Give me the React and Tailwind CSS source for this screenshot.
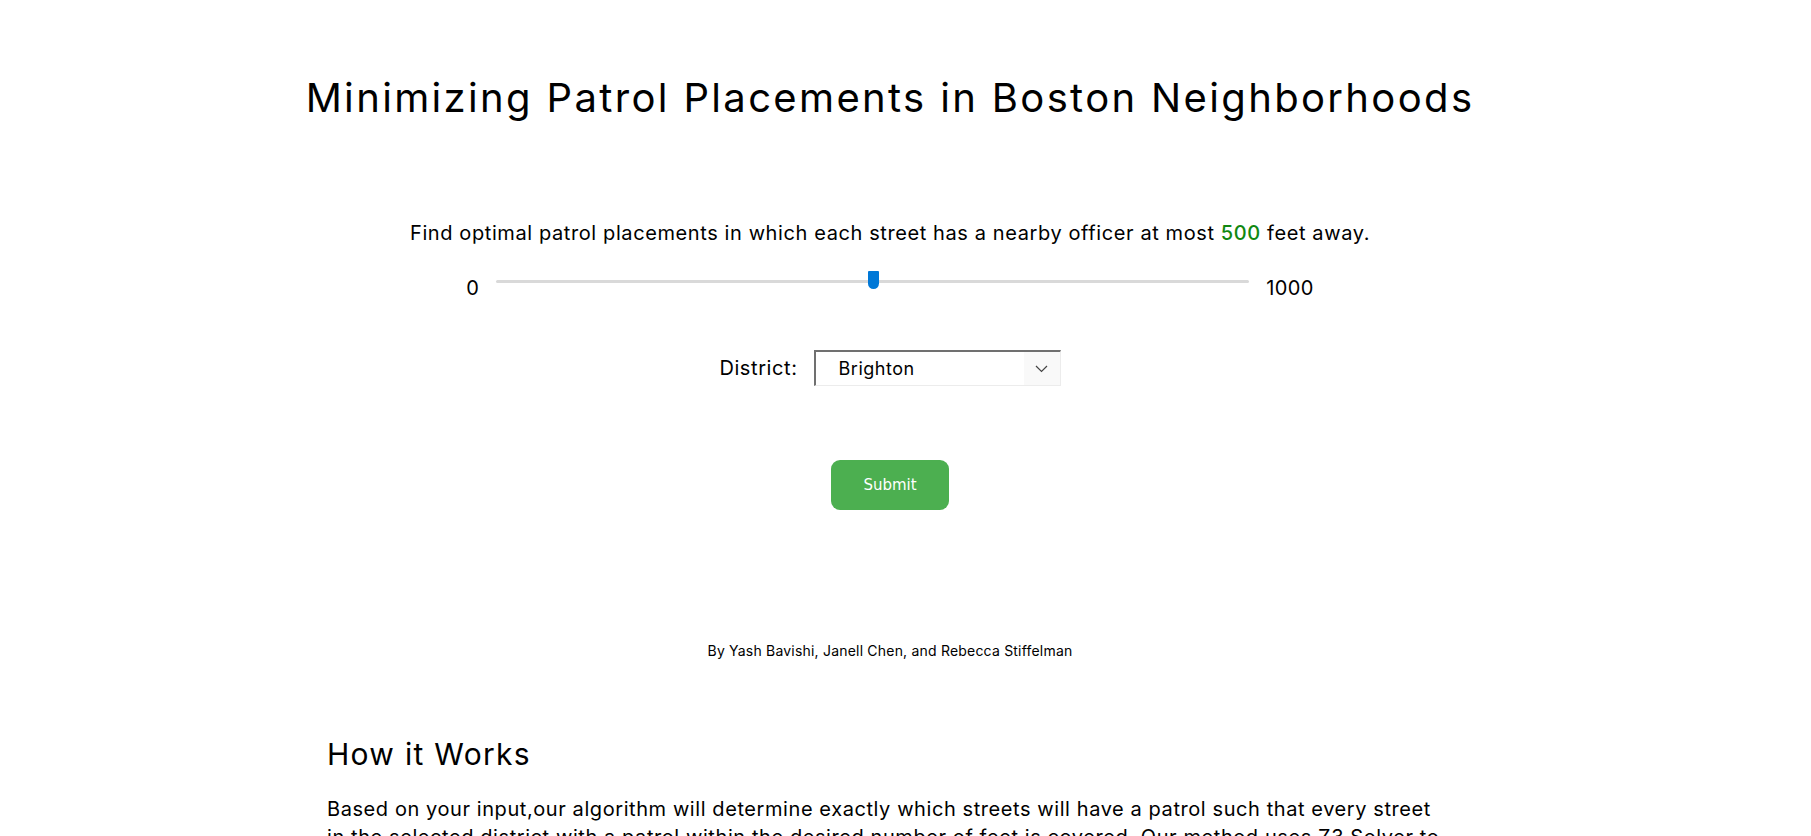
import { useState } from 'react';

const DISTRICTS = ['Brighton', 'Allston', 'Back Bay', 'Dorchester', 'Roxbury'];

function Slider({ value, min, max }) {
  const pct = ((value - min) / (max - min)) * 100;
  return (
    <div className="flex items-center gap-[17px]">
      <span className="text-[20px] leading-none mt-[14px] tracking-[0.4px]">{min}</span>
      <div className="relative w-[753px] h-[3px] bg-[#d9d9d9] rounded-full">
        <div
          className="absolute top-[-9px] w-[11px] h-[18px] bg-[#0078d7] rounded-b-[6px] rounded-t-[1px]"
          style={{ left: `calc(${pct}% - 5px)` }}
        />
      </div>
      <span className="text-[20px] leading-none mt-[14px] tracking-[0.4px]">{max}</span>
    </div>
  );
}

export default function App() {
  const [feet] = useState(500);
  const [district] = useState(DISTRICTS[0]);

  return (
    <div className="min-h-screen bg-white text-black font-['Inter',sans-serif] pr-[31px] overflow-hidden h-[836px]">
      <div className="flex flex-col items-center">
        <h1 className="mt-[74px] text-[40px] leading-[48px] font-normal tracking-[2.35px]">
          Minimizing Patrol Placements in Boston Neighborhoods
        </h1>

        <p className="mt-[99px] text-[20px] leading-[24px] tracking-[0.6px]">
          Find optimal patrol placements in which each street has a nearby officer at most{' '}
          <span className="text-[#118811] font-medium">{feet}</span> feet away.
        </p>

        <div className="mt-[19px]">
          <Slider value={feet} min={0} max={1000} />
        </div>

        <div className="mt-[52px] flex items-center gap-[16px]">
          <span className="text-[20px] tracking-[0.6px]">District:</span>
          <div className="w-[247px] h-[36px] flex items-center border-t-2 border-l-2 border-t-[#707070] border-l-[#707070] border-r border-b border-r-[#ececec] border-b-[#ececec]">
            <span className="flex-1 pl-[23px] text-[18px] tracking-[0.5px]">{district}</span>
            <div className="w-[36px] h-full bg-[#f9f9f9] flex items-center justify-center">
              <svg width="13" height="8" viewBox="0 0 13 8" fill="none">
                <path d="M1 1l5.5 5.5L12 1" stroke="#444" strokeWidth="1.2" />
              </svg>
            </div>
          </div>
        </div>

        <button className="mt-[74px] w-[118px] h-[50px] rounded-[9px] bg-[#4caf50] text-white text-[15px] font-['DejaVu_Sans',sans-serif]">
          Submit
        </button>

        <p className="mt-[131px] text-[14px] leading-[20px] tracking-[0.2px]">
          By Yash Bavishi, Janell Chen, and Rebecca Stiffelman
        </p>

        <section className="mt-[75px] w-[1126px]">
          <h2 className="text-[30px] leading-[36px] font-normal tracking-[1.3px]">How it Works</h2>
          <p className="mt-[23px] whitespace-nowrap text-[20px] leading-[28px] tracking-[0.58px]">
            Based on your input,our algorithm will determine exactly which streets will have a patrol such that every street
            <br />
            in the selected district with a patrol within the desired number of feet is covered. Our method uses Z3 Solver to
            <br />
            find the minimum number of patrols needed for the chosen district and distance.
          </p>
        </section>
      </div>
    </div>
  );
}
